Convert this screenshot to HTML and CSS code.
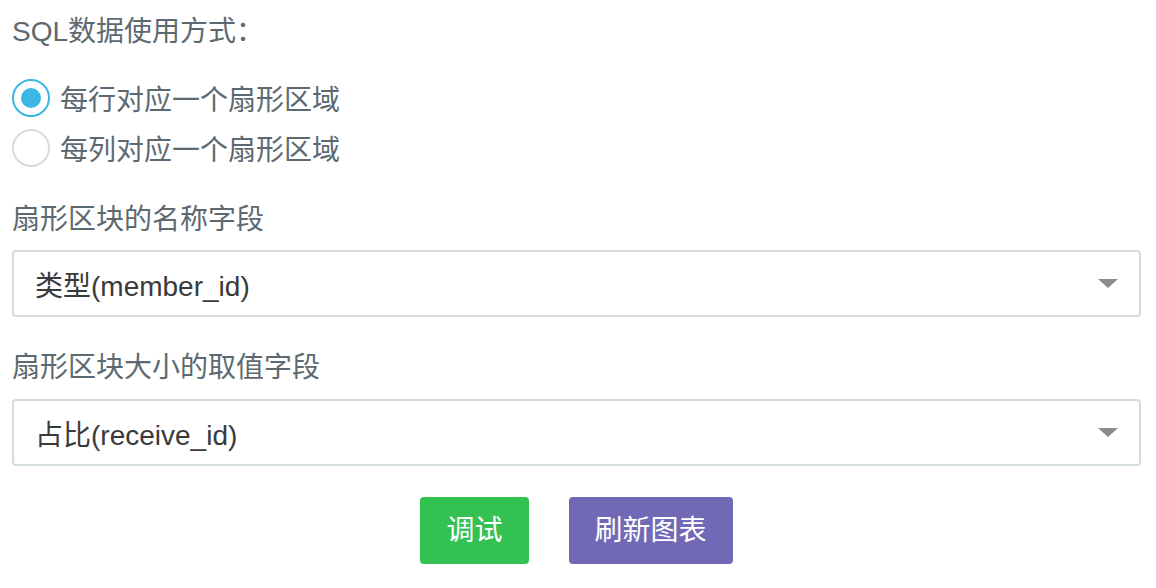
FILE: index.html
```html
<!DOCTYPE html>
<html lang="zh-CN">
<head>
    <meta charset="UTF-8">
    <title>饼图设置</title>
    <link rel="stylesheet" href="styles.css">
</head>
<body>
    <div class="setting">
        <p class="title">SQL数据使用方式：</p>
        <ul class="radio_list">
            <li class="on"><span class="circle"></span>每行对应一个扇形区域</li>
            <li><span class="circle"></span>每列对应一个扇形区域</li>
        </ul>

        <p class="title t2">扇形区块的名称字段</p>
        <div class="select">
            <span class="value">类型(member_id)</span>
            <span class="arrow"></span>
        </div>

        <p class="title t3">扇形区块大小的取值字段</p>
        <div class="select s2">
            <span class="value">占比(receive_id)</span>
            <span class="arrow"></span>
        </div>

        <div class="btnSet">
            <a class="btn debug" href="#">调试</a>
            <a class="btn refresh" href="#">刷新图表</a>
        </div>
    </div>
</body>
</html>
```

FILE: styles.css
```css
* {margin: 0; padding: 0; box-sizing: border-box;}
ul, li {list-style: none;}
a {text-decoration: none;}

body {background-color: #fff; font-family: "Liberation Sans", "Noto Sans CJK SC", sans-serif; font-size: 28px; color: #5d6970;}

.setting {padding: 0 15px 0 12px;}

.title {height: 40px; line-height: 40px; margin-top: 12px;}
.title.t2 {margin-top: 27px;}
.title.t3 {margin-top: 31px;}

.radio_list {margin-top: 21px;}
.radio_list li {display: flex; align-items: center; height: 50px;}
.radio_list .circle {display: flex; justify-content: center; align-items: center; width: 38px; height: 38px; margin-right: 10px;
                     border: 2px solid #d3dddd; border-radius: 50%;}
.radio_list li.on .circle {border-color: #3ab7e4;}
.radio_list li.on .circle::after {content: ""; width: 20px; height: 20px; border-radius: 50%; background-color: #3ab7e4;}

.select {display: flex; justify-content: space-between; align-items: center; height: 67px; margin-top: 10px; padding: 0 21px 0 21px;
         border: 2px solid #d3dcdc; border-radius: 4px; color: #3a3a3a;}
.select.s2 {margin-top: 11px;}
.select .arrow {width: 0; height: 0; border-left: 10px solid transparent; border-right: 10px solid transparent; border-top: 9px solid #8c8c8c;}

.btnSet {display: flex; justify-content: center; gap: 40px; margin-top: 31px;}
.btnSet .btn {display: block; height: 67px; line-height: 67px; padding: 0 26px; border-radius: 4px; color: #fff; text-align: center;}
.btnSet .debug {background-color: #33c152;}
.btnSet .refresh {background-color: #7269b6;}
```
